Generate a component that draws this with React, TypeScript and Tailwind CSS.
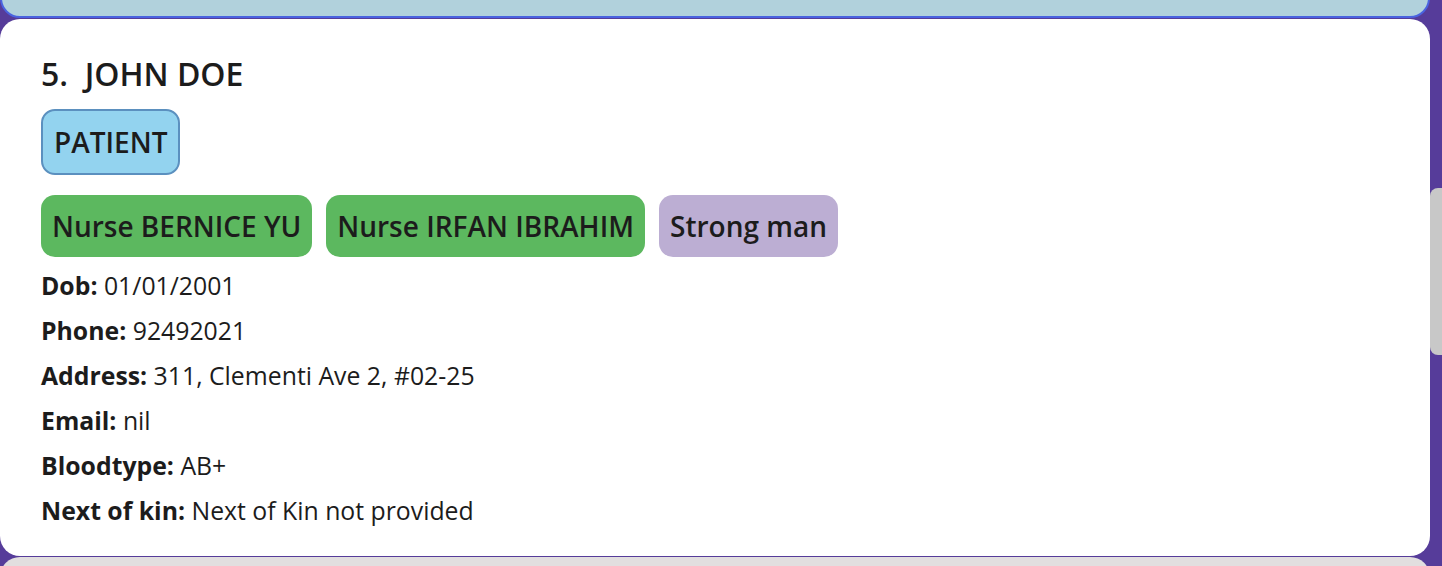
import React from "react";

const tags = [
  { label: "Nurse BERNICE YU", color: "bg-[#5cb85f]" },
  { label: "Nurse IRFAN IBRAHIM", color: "bg-[#5cb85f]" },
  { label: "Strong man", color: "bg-[#bcaed3]" },
];

const details = [
  { label: "Dob:", value: "01/01/2001" },
  { label: "Phone:", value: "92492021" },
  { label: "Address:", value: "311, Clementi Ave 2, #02-25" },
  { label: "Email:", value: "nil" },
  { label: "Bloodtype:", value: "AB+" },
  { label: "Next of kin:", value: "Next of Kin not provided" },
];

const App = () => {
  return (
    <div
      className="flex h-[566px] w-[1442px] overflow-hidden bg-[#563c9a] text-[#1c1c1c]"
      style={{ fontFamily: '"Open Sans", "Noto Sans", sans-serif' }}
    >
      <div className="flex w-[1430px] flex-col">
        <div className="-mt-[42px] h-[60px] shrink-0 rounded-[20px] border-2 border-[#4a63e0] bg-[#b1d1dc]" />
        <div className="mt-[1px] flex h-[537px] shrink-0 flex-col rounded-[20px] bg-white pl-[41px] pt-[36px]">
          <h2 className="text-[32px] font-semibold leading-[38px]">
            5.&nbsp;&nbsp;JOHN DOE
          </h2>
          <div className="mt-[16px] flex">
            <span className="flex h-[66px] items-center rounded-[14px] border-2 border-[#5b90bf] bg-[#93d3ef] px-[11px] text-[28px] font-semibold">
              PATIENT
            </span>
          </div>
          <div className="mt-[20px] flex gap-[14px]">
            {tags.map((tag) => (
              <span
                key={tag.label}
                className={`flex h-[62px] items-center rounded-[14px] px-[11px] text-[28px] font-semibold ${tag.color}`}
              >
                {tag.label}
              </span>
            ))}
          </div>
          <div className="mt-[6px] flex flex-col">
            {details.map((d) => (
              <p key={d.label} className="h-[45px] text-[24.8px] leading-[45px]">
                <span className="font-bold">{d.label}</span> {d.value}
              </p>
            ))}
          </div>
        </div>
        <div className="mt-[1px] h-[40px] shrink-0 rounded-[20px] bg-[#e2dedf]" />
      </div>
      <div className="flex w-[12px] flex-col pt-[188px]">
        <div className="h-[167px] rounded-l-[8px] bg-[#c8c8c8]" />
      </div>
    </div>
  );
};

export default App;
